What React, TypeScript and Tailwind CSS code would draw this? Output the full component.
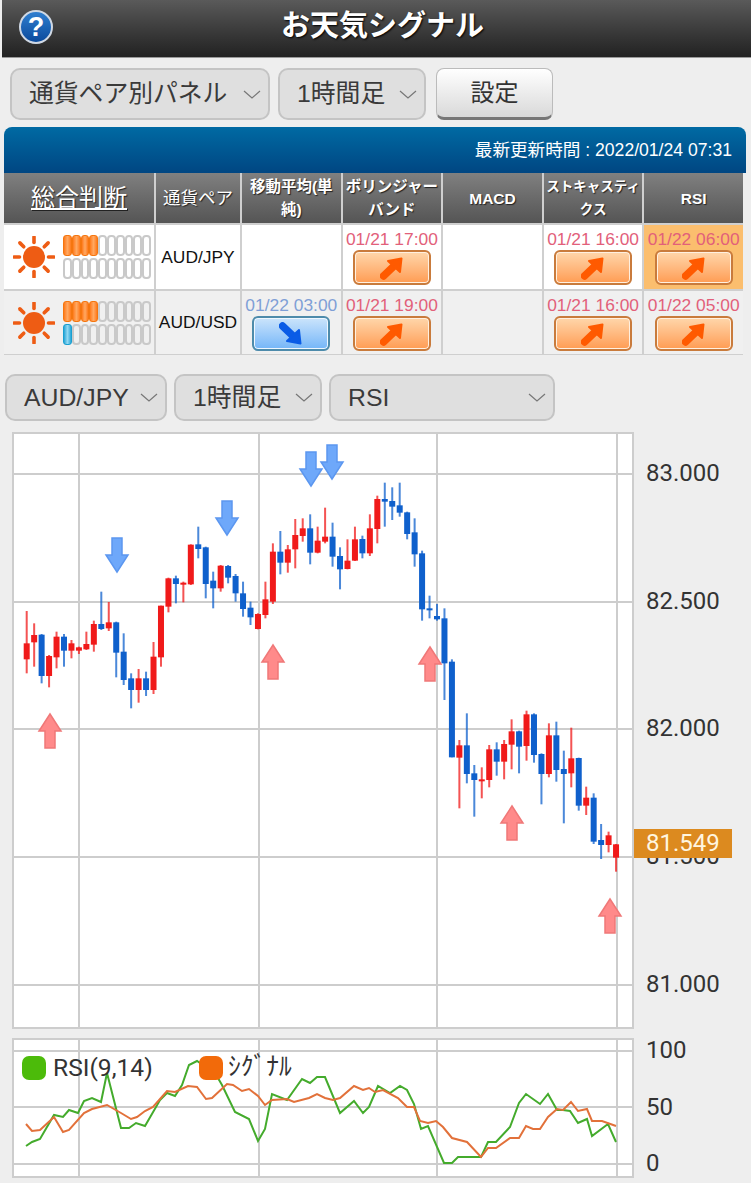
type Candle = [string, number, number, number, number];

// wick top, body top, body bottom, wick bottom (measured at 3x, y from 430)
const candlesTop: Candle[] = [
  ['r', 543, 640, 688, 730], ['r', 580, 615, 637, 710], ['b', 612, 614, 738, 760], ['r', 675, 678, 738, 772],
  ['r', 605, 620, 682, 715], ['b', 612, 620, 662, 710], ['r', 630, 640, 662, 685], ['r', 650, 652, 662, 672],
  ['r', 605, 642, 658, 660], ['r', 572, 582, 644, 665], ['b', 485, 582, 597, 600], ['r', 516, 577, 595, 603],
  ['b', 575, 577, 668, 742], ['b', 610, 665, 750, 765], ['b', 730, 745, 780, 835], ['r', 717, 745, 780, 818],
  ['b', 725, 745, 780, 798], ['r', 636, 680, 780, 792], ['r', 527, 527, 682, 710], ['r', 443, 445, 530, 547],
  ['b', 437, 445, 462, 520], ['r', 455, 458, 462, 517], ['r', 343, 344, 463, 465], ['b', 290, 343, 357, 385],
  ['b', 350, 352, 462, 505], ['b', 425, 452, 475, 535], ['r', 405, 407, 475, 485], ['b', 405, 408, 443, 460],
  ['b', 432, 438, 490, 515], ['b', 455, 490, 537, 560], ['b', 515, 533, 562, 585], ['r', 550, 552, 597, 598],
  ['r', 455, 508, 555, 565], ['r', 340, 365, 515, 522], ['b', 303, 365, 398, 433], ['r', 345, 358, 398, 428],
  ['r', 267, 315, 358, 415], ['r', 265, 295, 318, 335], ['b', 253, 295, 368, 403], ['r', 290, 332, 368, 370],
  ['r', 233, 320, 335, 340], ['b', 278, 320, 380, 410], ['b', 352, 378, 418, 478], ['r', 328, 392, 417, 418],
  ['r', 290, 328, 392, 393], ['b', 317, 327, 370, 385], ['r', 253, 295, 370, 378], ['r', 197, 207, 297, 340],
  ['b', 158, 207, 215, 290], ['b', 172, 213, 230, 270], ['b', 158, 226, 248, 260], ['b', 245, 247, 312, 328],
  ['b', 265, 307, 373, 410], ['b', 362, 370, 538, 572], ['b', 497, 535, 541, 565], ['b', 522, 558, 568, 572],
  ['b', 535, 565, 700, 810], ['b', 688, 695, 982, 982],
];

// same, y from 690
const candlesBottom: Candle[] = [
  ['r', 150, 166, 203, 355], ['b', 70, 166, 252, 280], ['b', 225, 250, 270, 380], ['r', 232, 268, 270, 325],
  ['r', 165, 178, 270, 292], ['b', 157, 178, 215, 257], ['r', 150, 162, 215, 268], ['r', 88, 124, 164, 238],
  ['b', 122, 124, 170, 250], ['r', 62, 73, 168, 212], ['b', 70, 73, 195, 218], ['b', 190, 192, 252, 343],
  ['r', 100, 136, 252, 262], ['b', 95, 136, 240, 275], ['b', 182, 237, 252, 400], ['r', 113, 205, 250, 292],
  ['b', 203, 204, 347, 362], ['r', 290, 323, 347, 375], ['b', 310, 323, 455, 462], ['b', 402, 450, 465, 507],
  ['r', 425, 436, 465, 487], ['r', 462, 463, 503, 545],
];

const candles = [
  ...candlesTop.map((c) => ({ c, base: 430 })),
  ...candlesBottom.map((c) => ({ c, base: 690 })),
];

const rsiGreen =
  '26,1146 32,1142 40,1139 54,1115 63,1117 69,1110 78,1113 84,1101 92,1098 101,1102 107,1073 121,1128 129,1128 136,1123 145,1126 160,1100 167,1093 175,1096 182,1085 189,1065 197,1061 215,1073 222,1085 235,1112 249,1119 258,1141 265,1129 272,1094 287,1100 302,1079 310,1083 317,1077 325,1077 340,1113 354,1101 363,1113 369,1107 375,1093 378,1086 390,1093 400,1086 407,1090 414,1104 421,1129 428,1126 444,1163 452,1163 458,1157 481,1157 488,1142 496,1142 510,1127 519,1103 526,1094 540,1104 548,1094 557,1110 563,1110 570,1111 578,1123 587,1119 592,1136 608,1124 616,1142';

const rsiOrange =
  '26,1124 32,1131 40,1130 54,1117 63,1132 69,1130 84,1113 92,1109 107,1105 121,1113 131,1119 137,1117 145,1111 153,1107 167,1091 175,1092 188,1086 197,1087 206,1099 212,1098 227,1084 233,1085 242,1091 249,1089 258,1096 265,1105 272,1100 287,1099 294,1102 309,1098 317,1094 325,1098 333,1100 340,1098 354,1086 363,1090 369,1088 375,1092 383,1090 398,1098 407,1107 414,1107 420,1121 428,1123 436,1121 443,1127 452,1138 467,1142 481,1157 488,1148 496,1148 510,1138 519,1138 526,1126 533,1129 540,1129 548,1117 557,1109 563,1110 571,1102 578,1111 587,1109 592,1121 602,1121 616,1126';

const priceLevels = [
  { y: 474, label: '83.000' },
  { y: 602, label: '82.500' },
  { y: 729, label: '82.000' },
  { y: 857, label: '81.500' },
  { y: 985, label: '81.000' },
];

const gridColumns = [79, 259, 437, 617];
const downArrows = [[117, 538], [227, 501], [311, 452], [332, 445]];
const upArrows = [[50, 714], [273, 645], [430, 647], [512, 806], [610, 899]];

function Select({ label, className }: { label: string; className: string }) {
  return (
    <div
      className={`flex items-center justify-between rounded-[10px] border-2 border-[#c4c4c4] bg-[#dfdfdf] pr-[7px] pl-[17px] text-[24.8px] text-[#3a3a3a] ${className}`}
    >
      <span className="whitespace-nowrap">{label}</span>
      <svg width="18" height="9" viewBox="0 0 18 9" fill="none" stroke="#777" strokeWidth="1.2">
        <path d="M1 1 L9 8 L17 1" />
      </svg>
    </div>
  );
}

function Gauge({ filled, color }: { filled: number; color: 'orange' | 'blue' }) {
  return (
    <div className="flex h-[21px] gap-0">
      {Array.from({ length: 10 }).map((_, i) => (
        <div
          key={i}
          className={
            i >= filled
              ? 'h-full w-[8.8px] rounded-[4px] border-2 border-[#c9c9c9]'
              : color === 'orange'
                ? 'h-full w-[8.8px] rounded-[3px] border border-[#f5760f] bg-gradient-to-r from-[#ff7a10] via-[#ffa860] to-[#ff7a10]'
                : 'h-full w-[8.8px] rounded-[3px] border border-[#1b9fd0] bg-gradient-to-r from-[#1ba7d8] via-[#8fd8f2] to-[#1ba7d8]'
          }
        />
      ))}
    </div>
  );
}

function Sun() {
  const rays = [0, 45, 90, 135, 180, 225, 270, 315];
  return (
    <svg width="42" height="42" viewBox="-21 -21 42 42" className="shrink-0">
      <circle r="11" fill="#ee5c14" />
      {rays.map((r) => (
        <line
          key={r}
          x1="0"
          y1="-14.5"
          x2="0"
          y2="-20"
          stroke="#ee5c14"
          strokeWidth="3.6"
          strokeLinecap="round"
          transform={`rotate(${r})`}
        />
      ))}
    </svg>
  );
}

function Signal({ time, up = true }: { time: string; up?: boolean }) {
  const color = up ? '#ff5a00' : '#0a5ce6';
  return (
    <div className="flex flex-col items-center pt-[4px]">
      <div className={`text-[17.4px] leading-[20px] whitespace-nowrap ${up ? 'text-[#e2607a]' : 'text-[#7f9fd6]'}`}>
        {time}
      </div>
      <div
        className={
          up
            ? 'mt-[1px] flex h-[35px] w-[78px] items-center justify-center rounded-[6px] border-2 border-[#c97b3c] bg-gradient-to-b from-[#ffd6aa] to-[#ff9c52] shadow-[inset_0_0_0_1px_#fff0e0]'
            : 'mt-[1px] flex h-[35px] w-[78px] items-center justify-center rounded-[6px] border-2 border-[#4d8bab] bg-gradient-to-b from-[#cbe4fb] to-[#74b6f8] shadow-[inset_0_0_0_1px_#eef7ff]'
        }
      >
        <svg width="24" height="24" viewBox="0 0 24 24" className={up ? '' : '-scale-y-100'}>
          <path d="M3.5 20 L14 10" stroke={color} strokeWidth="7.5" strokeLinecap="round" />
          <path d="M8 5 L21.5 2.5 L20 16 Z" fill={color} stroke={color} strokeWidth="2" strokeLinejoin="round" />
        </svg>
      </div>
    </div>
  );
}

function HeadCell({ children, big }: { children: React.ReactNode; big?: boolean }) {
  return (
    <div
      className={`flex items-center justify-center bg-gradient-to-b from-[#808080] to-[#555555] text-center text-white [text-shadow:1px_1px_1px_#222] ${
        big ? 'text-[24px] underline' : 'text-[15.5px] leading-[23px] font-bold'
      }`}
    >
      {children}
    </div>
  );
}

function Row({ blue, alt, pair, cells }: { blue: number; alt: boolean; pair: string; cells: ({ time: string; up?: boolean; hot?: boolean } | null)[] }) {
  const bg = alt ? 'bg-[#f0f0f0]' : 'bg-white';
  return (
    <>
      <div className={`flex items-center gap-[8px] pl-[9px] ${bg}`}>
        <Sun />
        <div className="flex flex-col gap-[2px]">
          <Gauge filled={4} color="orange" />
          <Gauge filled={blue} color="blue" />
        </div>
      </div>
      <div className={`flex items-center justify-center text-[17.4px] text-[#111] ${bg}`}>{pair}</div>
      {cells.map((cell, i) => (
        <div key={i} className={cell?.hot ? 'bg-[#fbbe6e]' : bg}>
          {cell && <Signal time={cell.time} up={cell.up} />}
        </div>
      ))}
    </>
  );
}

function Arrow({ x, y, down }: { x: number; y: number; down?: boolean }) {
  const fill = down ? '#6ea8fa' : '#ff8a8a';
  const stroke = down ? '#5c97f0' : '#f07878';
  const points = down
    ? `${x - 5},${y} ${x + 5},${y} ${x + 5},${y + 17} ${x + 11},${y + 17} ${x},${y + 34} ${x - 11},${y + 17} ${x - 5},${y + 17}`
    : `${x - 5},${y + 34} ${x + 5},${y + 34} ${x + 5},${y + 17} ${x + 11},${y + 17} ${x},${y} ${x - 11},${y + 17} ${x - 5},${y + 17}`;
  return <polygon points={points} fill={fill} stroke={stroke} strokeWidth="1.5" />;
}

function PriceChart() {
  return (
    <svg width="751" height="600" viewBox="0 430 751 600" className="block">
      <rect x="13" y="433" width="620" height="595" fill="#fff" stroke="#cdcdcd" strokeWidth="2" />
      {gridColumns.map((x) => (
        <line key={x} x1={x} y1="433" x2={x} y2="1028" stroke="#cdcdcd" strokeWidth="2" />
      ))}
      {priceLevels.map(({ y, label }) => (
        <g key={y}>
          <line x1="13" y1={y} x2="633" y2={y} stroke="#cdcdcd" strokeWidth="2" />
          <text x="646" y={y + 7} fontSize="24" fill="#333" className="font-['Roboto',sans-serif]">
            {label}
          </text>
        </g>
      ))}
      {candles.map(({ c: [color, wt, bt, bb, wb], base }, i) => {
        const x = 26.7 + i * 7.46;
        const fill = color === 'r' ? '#f01a1a' : '#0f60cc';
        return (
          <g key={i} fill={fill}>
            <rect x={x - 1} y={base + wt / 3} width="2" height={(wb - wt) / 3} opacity="0.75" />
            <rect x={x - 3} y={base + bt / 3} width="6" height={Math.max((bb - bt) / 3, 2)} />
          </g>
        );
      })}
      {downArrows.map(([x, y]) => (
        <Arrow key={x} x={x} y={y} down />
      ))}
      {upArrows.map(([x, y]) => (
        <Arrow key={x} x={x} y={y} />
      ))}
      <rect x="634" y="829" width="98" height="29" fill="#dc8a1f" />
      <text x="646" y="851" fontSize="24" fill="#fff6e0" className="font-['Roboto',sans-serif]">
        81.549
      </text>
    </svg>
  );
}

function RsiChart() {
  return (
    <svg width="751" height="153" viewBox="0 1030 751 153" className="block">
      <rect x="13" y="1039" width="620" height="138" fill="#fff" stroke="#cdcdcd" strokeWidth="2" />
      {gridColumns.map((x) => (
        <line key={x} x1={x} y1="1039" x2={x} y2="1177" stroke="#cdcdcd" strokeWidth="2" />
      ))}
      {[
        { y: 1051, label: '100', ty: 1058 },
        { y: 1107, label: '50', ty: 1115 },
        { y: 1164, label: '0', ty: 1171 },
      ].map(({ y, label, ty }) => (
        <g key={y}>
          <line x1="13" y1={y} x2="633" y2={y} stroke="#cdcdcd" strokeWidth="2" />
          <text x="646" y={ty} fontSize="24" fill="#333" className="font-['Roboto',sans-serif]">
            {label}
          </text>
        </g>
      ))}
      <polyline points={rsiGreen} fill="none" stroke="#44ab2c" strokeWidth="2" />
      <polyline points={rsiOrange} fill="none" stroke="#e2713a" strokeWidth="2" />
      <rect x="22" y="1056" width="24" height="24" rx="7" fill="#4cbb0a" />
      <text x="53" y="1076" fontSize="24.6" fill="#333" className="font-['Roboto',sans-serif]">
        RSI(9,14)
      </text>
      <rect x="199" y="1056" width="24" height="24" rx="7" fill="#f26a0a" />
      <text x="228" y="1075" fontSize="25.5" fill="#333" className="font-['Noto_Sans_CJK_JP',sans-serif]">
        ｼｸﾞﾅﾙ
      </text>
    </svg>
  );
}

export default function App() {
  return (
    <div className="h-[1183px] w-[751px] overflow-hidden bg-[#eeeeee] font-['Liberation_Sans','Noto_Sans_CJK_JP',sans-serif]">
      <header className="ml-[2px] flex h-[58px] items-center border-b border-[#999] bg-gradient-to-b from-[#5a5a5a] to-[#222222] pb-[3px] pl-[17px]">
        <div className="flex h-[34px] w-[34px] items-center justify-center rounded-full border-2 border-[#cfd8e4] bg-gradient-to-b from-[#2f7fd0] to-[#0b4a9c] text-[27px] leading-none font-bold text-white">
          ?
        </div>
        <h1 className="ml-[228px] text-[29px] font-bold whitespace-nowrap text-white [text-shadow:1px_1px_2px_#000]">
          お天気シグナル
        </h1>
      </header>

      <div className="flex items-center gap-[8px] pt-[10px] pl-[10px]">
        <Select label="通貨ペア別パネル" className="h-[52px] w-[260px]" />
        <Select label="1時間足" className="h-[52px] w-[148px]" />
        <button className="ml-[2px] h-[52px] w-[117px] rounded-[8px] border border-b-[3px] border-[#bbbbbb] border-b-[#777] bg-gradient-to-b from-[#ffffff] to-[#d9d9d9] text-[24px] text-[#333]">
          設定
        </button>
      </div>

      <div className="mt-[7px] ml-[4px] flex h-[46px] w-[742px] items-center justify-end rounded-t-[8px] bg-gradient-to-b from-[#006aa3] to-[#004682] pr-[14px] text-[17.6px] text-white">
        最新更新時間 : 2022/01/24 07:31
      </div>
      <div className="ml-[4px] grid h-[182px] w-[739px] grid-cols-[150px_84px_repeat(5,minmax(0,1fr))] grid-rows-[50px_64px_63px] gap-[2px] bg-[#cfcfcf] pb-[1px]">
        <HeadCell big>総合判断</HeadCell>
        <HeadCell>
          <span className="text-[17.5px] font-normal">通貨ペア</span>
        </HeadCell>
        <HeadCell>移動平均(単<br />純)</HeadCell>
        <HeadCell>ボリンジャー<br />バンド</HeadCell>
        <HeadCell>MACD</HeadCell>
        <HeadCell>
          <span className="text-[13.5px] whitespace-nowrap">ストキャスティ<br />クス</span>
        </HeadCell>
        <HeadCell>RSI</HeadCell>
        <Row
          blue={0}
          alt={false}
          pair="AUD/JPY"
          cells={[null, { time: '01/21 17:00' }, null, { time: '01/21 16:00' }, { time: '01/22 06:00', hot: true }]}
        />
        <Row
          blue={1}
          alt
          pair="AUD/USD"
          cells={[
            { time: '01/22 03:00', up: false },
            { time: '01/21 19:00' },
            null,
            { time: '01/21 16:00' },
            { time: '01/22 05:00' },
          ]}
        />
      </div>

      <div className="mt-[19px] flex items-center gap-[7px] pl-[5px]">
        <Select label="AUD/JPY" className="h-[47px] w-[162px]" />
        <Select label="1時間足" className="h-[47px] w-[148px]" />
        <Select label="RSI" className="h-[47px] w-[226px]" />
      </div>

      <div className="mt-[9px]">
        <PriceChart />
        <RsiChart />
      </div>
    </div>
  );
}
